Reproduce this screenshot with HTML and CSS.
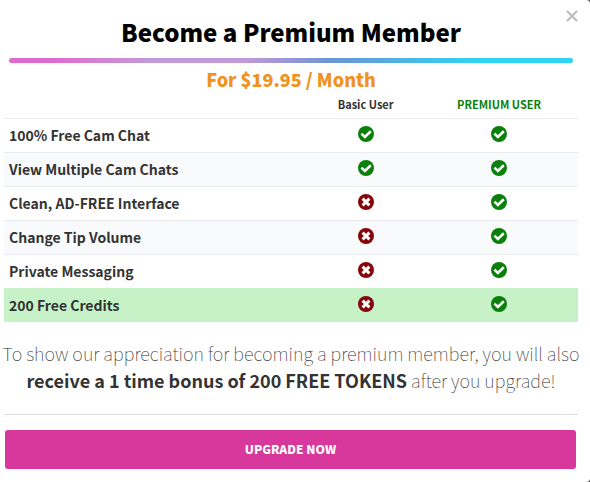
FILE: index.html
```html
<!DOCTYPE html>
<html lang="en">
<head>
    <meta charset="UTF-8">
    <meta name="viewport" content="width=device-width, initial-scale=1.0">
    <title>Become a Premium Member</title>
    <link rel="stylesheet" href="styles.css">
</head>
<body>
    <!-- Shared icons -->
    <svg class="icon-defs" aria-hidden="true">
        <symbol id="icon-yes" viewBox="0 0 16 16">
            <circle cx="8" cy="8" r="8" fill="#0a800a"/>
            <path d="M3.4 7.6 L6.9 11 L12.8 5.3" fill="none" stroke="#fff" stroke-width="2.6"/>
        </symbol>
        <symbol id="icon-no" viewBox="0 0 16 16">
            <circle cx="8" cy="8" r="8" fill="#850509"/>
            <path d="M4.6 4.6 L11.4 11.4 M11.4 4.6 L4.6 11.4" fill="none" stroke="#fff" stroke-width="3"/>
        </symbol>
    </svg>

    <div class="modal" role="dialog" aria-labelledby="modalTitle">
        <button class="close-button" type="button" aria-label="Close">
            <svg viewBox="0 0 12 12"><path d="M1 1 L11 11 M11 1 L1 11"/></svg>
        </button>

        <h1 class="modal-title" id="modalTitle">Become a Premium Member</h1>
        <div class="divider"></div>
        <h2 class="price">For $19.95 / Month</h2>

        <table class="features">
            <thead>
                <tr>
                    <td class="feature-col"></td>
                    <th class="basic-col" scope="col">Basic User</th>
                    <th class="premium-col" scope="col">PREMIUM USER</th>
                </tr>
            </thead>
            <tbody>
                <tr>
                    <th scope="row">100% Free Cam Chat</th>
                    <td><svg class="icon" role="img" aria-label="Yes"><use href="#icon-yes"/></svg></td>
                    <td><svg class="icon" role="img" aria-label="Yes"><use href="#icon-yes"/></svg></td>
                </tr>
                <tr>
                    <th scope="row">View Multiple Cam Chats</th>
                    <td><svg class="icon" role="img" aria-label="Yes"><use href="#icon-yes"/></svg></td>
                    <td><svg class="icon" role="img" aria-label="Yes"><use href="#icon-yes"/></svg></td>
                </tr>
                <tr>
                    <th scope="row">Clean, AD-FREE Interface</th>
                    <td><svg class="icon" role="img" aria-label="No"><use href="#icon-no"/></svg></td>
                    <td><svg class="icon" role="img" aria-label="Yes"><use href="#icon-yes"/></svg></td>
                </tr>
                <tr>
                    <th scope="row">Change Tip Volume</th>
                    <td><svg class="icon" role="img" aria-label="No"><use href="#icon-no"/></svg></td>
                    <td><svg class="icon" role="img" aria-label="Yes"><use href="#icon-yes"/></svg></td>
                </tr>
                <tr>
                    <th scope="row">Private Messaging</th>
                    <td><svg class="icon" role="img" aria-label="No"><use href="#icon-no"/></svg></td>
                    <td><svg class="icon" role="img" aria-label="Yes"><use href="#icon-yes"/></svg></td>
                </tr>
                <tr class="highlight">
                    <th scope="row">200 Free Credits</th>
                    <td><svg class="icon" role="img" aria-label="No"><use href="#icon-no"/></svg></td>
                    <td><svg class="icon" role="img" aria-label="Yes"><use href="#icon-yes"/></svg></td>
                </tr>
            </tbody>
        </table>

        <p class="bonus">To show our appreciation for becoming a premium member, you will also <strong>receive a 1 time bonus of 200 FREE TOKENS</strong> after you upgrade!</p>

        <div class="modal-footer">
            <button class="upgrade-button" type="button">UPGRADE NOW</button>
        </div>
    </div>
</body>
</html>
```
FILE: styles.css
```css
* {
    box-sizing: border-box;
}

body {
    margin: 0;
    background-color: #555;
    font-family: "Noto Sans CJK SC", "Noto Sans", sans-serif;
    color: #333;
}

.icon-defs {
    display: none;
}

.modal {
    position: relative;
    min-height: 100vh;
    padding: 15px 12px 12px 4px;
    background-color: #fff;
    border-radius: 0 4px 4px 0;
}

.close-button {
    position: absolute;
    top: 10px;
    right: 12px;
    padding: 0;
    border: none;
    background: none;
    cursor: pointer;
}

.close-button svg {
    display: block;
    width: 12px;
    height: 12px;
    fill: none;
    stroke: #bbb;
    stroke-width: 2;
}

.modal-title {
    margin: 0;
    font-size: 24px;
    font-weight: 900;
    line-height: 34px;
    text-align: center;
    color: #000;
}

/* Gradient line under the title */
.divider {
    height: 5px;
    margin: 9px 5px 0;
    border-radius: 3px;
    background: linear-gradient(to right, #e06bd0 8%, #c39ad6 25%, #c39ad6 42%, #6b94d6 57%, #2fd3f5 83%);
}

.price {
    margin: 4px 0 0;
    font-size: 18px;
    font-weight: 900;
    line-height: 24px;
    text-align: center;
    color: #f0921e;
}

.features {
    width: 100%;
    table-layout: fixed;
    border-collapse: collapse;
    text-align: center;
}

.features td,
.features th {
    padding: 0 5px;
}

.features thead tr {
    height: 27px;
    font-size: 11px;
}

.feature-col {
    width: 53.5%;
}

.basic-col {
    width: 19%;
}

.premium-col {
    color: #0a800a;
}

.features tbody tr {
    height: 34px;
    border-top: 1px solid #e9eaee;
}

.features tbody tr:nth-child(even) {
    background-color: #f9fafc;
}

.features tbody th {
    font-size: 14px;
    text-align: left;
}

.features tbody tr.highlight {
    background-color: #c7f2c7;
    border-top-color: #c7f2c7;
}

.features tbody td {
    padding-bottom: 2px;
}

.icon {
    display: block;
    width: 16px;
    height: 16px;
    margin: 0 auto;
}

.bonus {
    margin: 18px -3px 20px;
    font-size: 18px;
    font-weight: 100;
    line-height: 27px;
    text-align: center;
}

.bonus strong {
    font-weight: 700;
}

.modal-footer {
    padding: 15px 2px 0 1px;
    border-top: 1px solid #ddd;
}

.upgrade-button {
    width: 100%;
    height: 39px;
    padding: 0 0 2px;
    border: none;
    border-radius: 3px;
    background-color: #d8389b;
    color: #fff;
    font-family: inherit;
    font-size: 12px;
    font-weight: 900;
    cursor: pointer;
}

.upgrade-button:hover {
    background-color: #c22c89;
}
```
